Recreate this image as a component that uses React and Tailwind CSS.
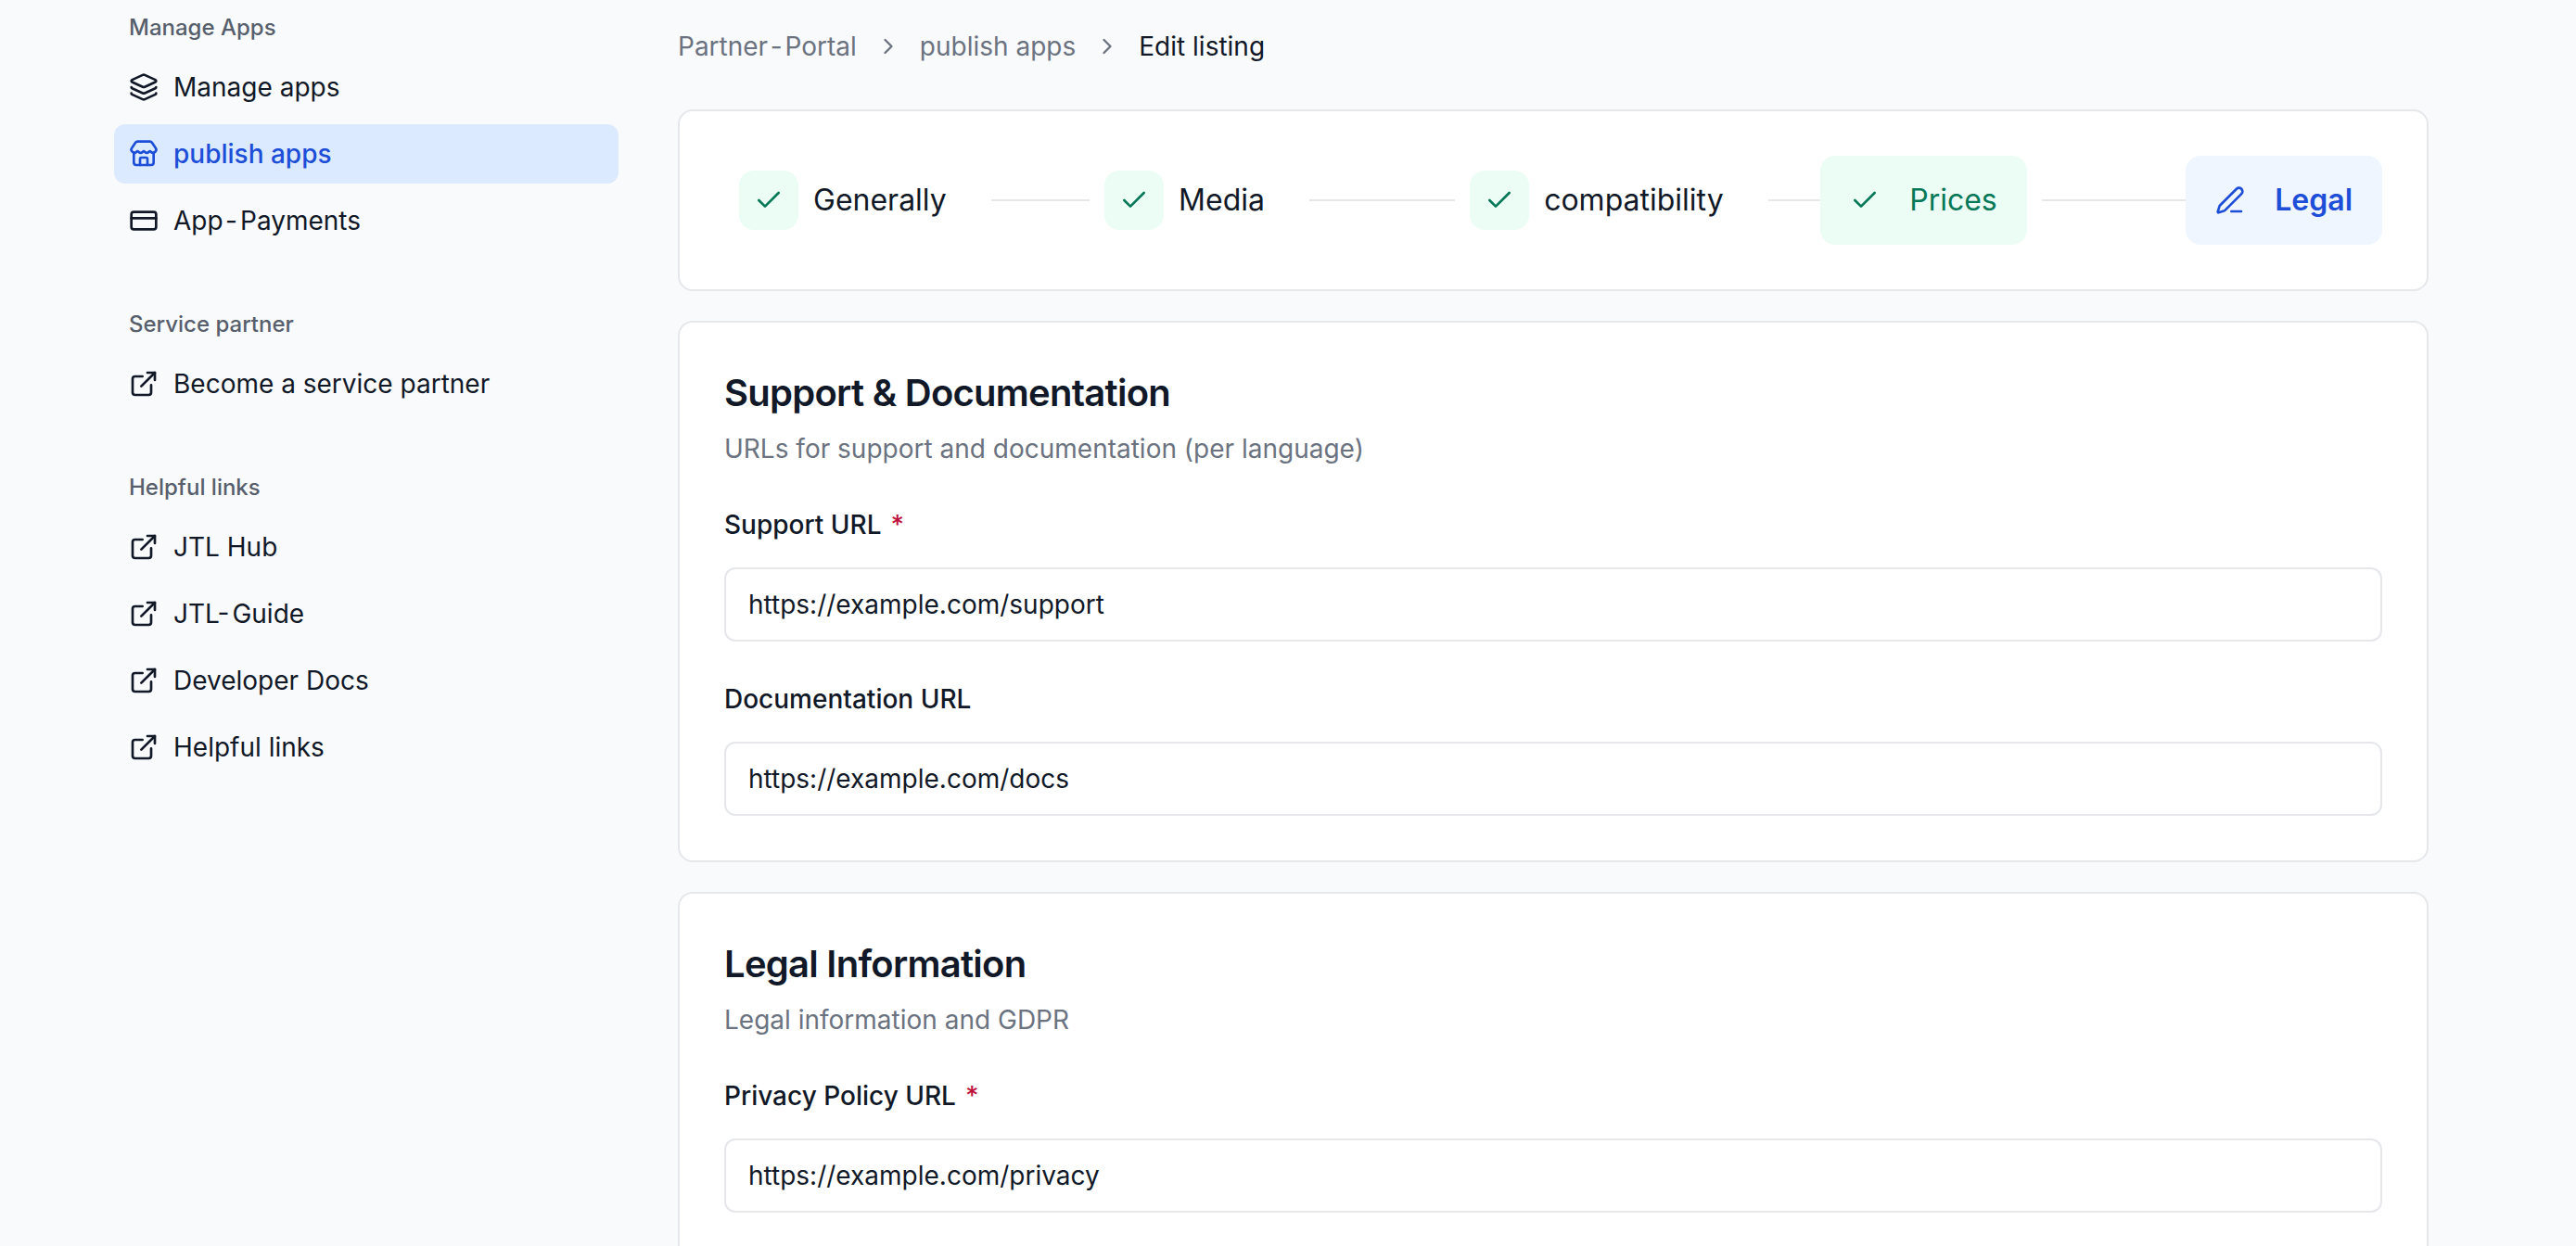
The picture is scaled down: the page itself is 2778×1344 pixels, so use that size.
import React from 'react';
import { Check, ChevronRight, CreditCard, ExternalLink, Layers, PenLine, Store } from 'lucide-react';

const navGroups = [
  {
    title: 'Manage Apps',
    items: [
      { label: 'Manage apps', icon: Layers },
      { label: 'publish apps', icon: Store, active: true },
      { label: 'App-Payments', icon: CreditCard },
    ],
  },
  {
    title: 'Service partner',
    items: [{ label: 'Become a service partner', icon: ExternalLink }],
  },
  {
    title: 'Helpful links',
    items: [
      { label: 'JTL Hub', icon: ExternalLink },
      { label: 'JTL-Guide', icon: ExternalLink },
      { label: 'Developer Docs', icon: ExternalLink },
      { label: 'Helpful links', icon: ExternalLink },
    ],
  },
];

const steps = [
  { label: 'Generally', state: 'done' },
  { label: 'Media', state: 'done' },
  { label: 'compatibility', state: 'done' },
  { label: 'Prices', state: 'visited' },
  { label: 'Legal', state: 'current' },
];

const buttonStyles = {
  done: 'text-[#111827]',
  visited: 'bg-emerald-50 text-[#047857]',
  current: 'bg-blue-50 text-[#1d4ed8] font-semibold',
};

const iconStyles = {
  done: 'bg-emerald-50 text-[#047857]',
  visited: 'text-[#047857]',
  current: 'text-[#1d4ed8]',
};

// Hyphenated names get a little air around the hyphen, an open L already leaves some
function Label({ text }) {
  const [head, tail] = text.split('-');
  if (!tail) return <span>{text}</span>;
  return (
    <span>
      {head}
      <span className={head.endsWith('L') ? 'mr-[3px]' : 'mr-[3px] ml-[2.5px]'}>-</span>
      {tail}
    </span>
  );
}

function Sidebar() {
  return (
    <aside className="-mt-0.5 flex w-[544px] flex-col gap-12">
      {navGroups.map((group) => (
        <nav key={group.title}>
          <h2 className="flex h-16 items-center px-4 text-[24px] font-medium text-[#575e6c]">{group.title}</h2>
          <ul className="flex flex-col gap-2">
            {group.items.map(({ label, icon: Icon, active }) => (
              <li key={label}>
                <a
                  className={`flex h-16 items-center gap-4 rounded-xl px-4 text-[28px] ${
                    active ? 'bg-blue-100 font-medium text-[#1d4ed8]' : 'text-[#111827]'
                  }`}
                >
                  <Icon className="size-8" />
                  <Label text={label} />
                </a>
              </li>
            ))}
          </ul>
        </nav>
      ))}
    </aside>
  );
}

function Breadcrumb() {
  return (
    <nav className="flex h-10 items-center gap-5 text-[28px] text-[#6b7280]">
      <a><Label text="Partner-Portal" /></a>
      <ChevronRight className="size-7" />
      <a>publish apps</a>
      <ChevronRight className="size-7" />
      <span className="text-[#111827]">Edit listing</span>
    </nav>
  );
}

function Stepper() {
  return (
    <ol className="flex h-[196px] shrink-0 items-center rounded-2xl border-2 border-gray-200 bg-white px-12">
      {steps.map(({ label, state }, i) => {
        const isLast = i === steps.length - 1;
        const Icon = state === 'current' ? PenLine : Check;
        return (
          <li key={label} className={isLast ? 'flex items-center' : 'flex flex-1 items-center'}>
            <button className={`flex h-24 items-center gap-4 rounded-2xl pr-8 pl-4 text-[32px] ${buttonStyles[state]}`}>
              <span className={`flex size-16 items-center justify-center rounded-2xl ${iconStyles[state]}`}>
                <Icon className="size-8" />
              </span>
              {label}
            </button>
            {!isLast && <span className="ml-4 h-0.5 flex-1 bg-gray-200" />}
          </li>
        );
      })}
    </ol>
  );
}

function Section({ title, description, className = '', children }) {
  return (
    <section className={`shrink-0 rounded-2xl border-2 border-gray-200 bg-white p-12 ${className}`}>
      <h2 className="text-[40px] leading-14 font-semibold tracking-[-0.0185em] text-[#111827]">{title}</h2>
      <p className="mt-3 text-[28px] leading-10 text-[#6b7280]">{description}</p>
      <div className="mt-12 flex flex-col gap-12">{children}</div>
    </section>
  );
}

function UrlField({ label, value, required }) {
  return (
    <label className="flex flex-col gap-8">
      <span className="text-[28px] leading-7 font-medium text-[#111827]">
        {label}
        {required && <span className="ml-[10px] text-[#be123c]">*</span>}
      </span>
      <input
        type="text"
        defaultValue={value}
        className="h-20 rounded-xl border-2 border-gray-200 bg-white px-6 text-[28px] text-[#111827]"
      />
    </label>
  );
}

export default function App() {
  return (
    <div className="flex h-screen gap-16 overflow-hidden bg-[#f9fafc] pl-[123px] font-['Inter',sans-serif]">
      <Sidebar />
      <main className="flex w-[1888px] flex-col gap-8 pt-[30px]">
        <div className="mb-4">
          <Breadcrumb />
        </div>
        <Stepper />
        <Section title="Support & Documentation" description="URLs for support and documentation (per language)">
          <UrlField label="Support URL" value="https://example.com/support" required />
          <UrlField label="Documentation URL" value="https://example.com/docs" />
        </Section>
        <Section
          title="Legal Information"
          description="Legal information and GDPR"
          className="h-[584px]"
        >
          <UrlField label="Privacy Policy URL" value="https://example.com/privacy" required />
        </Section>
      </main>
    </div>
  );
}
